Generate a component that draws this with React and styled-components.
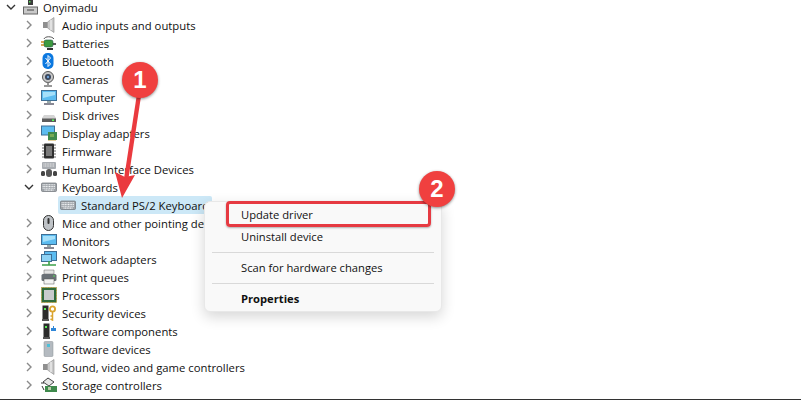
import React from "react";
import styled, { createGlobalStyle } from "styled-components";

const Global = createGlobalStyle`
  html, body { margin: 0; padding: 0; background: #fff; }
  body { font-family: "Open Sans", "Noto Sans", "Liberation Sans", sans-serif; }
`;
const Page = styled.div`
  position: relative; width: 801px; height: 400px; overflow: hidden; background: #fff;
  border-bottom: 1px solid #333; box-sizing: border-box;
`;
const Tree = styled.ul`
  list-style: none; margin: -2px 0 0; padding: 0; display: flex; flex-direction: column;
`;
const Row = styled.li`
  display: flex; align-items: center; height: 18px; box-sizing: border-box;
  padding-left: ${p => p.$indent}px; font-size: 11.3px; color: #111; white-space: nowrap;
`;
const Selected = styled.span`
  display: flex; align-items: center; height: 18px; width: 154px; box-sizing: border-box;
  padding-left: 2px; background: #cce8f7; border-radius: 2px;
`;
const Chevron = styled.svg`
  width: 10px; height: 10px; flex: none; margin-right: ${p => p.$gap}px;
  fill: none; stroke: ${p => p.$open ? "#333" : "#8a8a8a"}; stroke-width: 1.4;
`;
const Icon = styled.svg`
  width: 16px; height: 16px; flex: none; margin-right: ${p => p.$gap ?? 5}px;
`;
const Label = styled.span`letter-spacing: 0;`;

const Menu = styled.div`
  position: absolute; left: 204px; top: 201px; width: 238px; height: 111px; box-sizing: border-box;
  background: #f9f9f9; border: 1px solid #e8e8e8; border-radius: 6px;
  box-shadow: 0 5px 14px rgba(0,0,0,.16);
  padding: 2px 7px 0; display: flex; flex-direction: column; font-size: 11.2px; color: #111;
`;
const Item = styled.div`
  height: ${p => p.$h}px; flex: none; display: flex; align-items: center; padding-left: 29px;
  font-weight: ${p => p.$bold ? 700 : 400};
`;
const Divider = styled.div`height: 1px; flex: none; background: #d9d9d9; margin: ${p => p.$m};`;
const Highlight = styled.div`
  position: absolute; left: 226px; top: 201px; width: 205px; height: 26px; box-sizing: border-box;
  border: 3px solid #e63a42; border-radius: 4px; box-shadow: 0 1px 2px rgba(0,0,0,.3);
`;
const Badge = styled.div`
  position: absolute; left: ${p => p.$x}px; top: ${p => p.$y}px; width: 36px; height: 36px;
  border-radius: 50%; background: #f0403f; color: #fff; display: flex; align-items: center;
  justify-content: center; font: 700 24px "Liberation Sans", sans-serif;
  box-shadow: 0 1px 3px rgba(0,0,0,.45);
`;
const Overlay = styled.svg`position: absolute; left: 0; top: 0; pointer-events: none;`;

const Right = ({ gap }) => <Chevron $gap={gap} viewBox="0 0 10 10"><path d="M3 1l4 4-4 4" /></Chevron>;
const Down = ({ gap }) => <Chevron $open $gap={gap} viewBox="0 0 10 10"><path d="M1 3l4 4 4-4" /></Chevron>;

const Kb = () => <>
  <rect x="0.5" y="4" width="15" height="8.5" rx="1" fill="#9ea3a8" stroke="#6f7378" strokeWidth=".7" />
  <path d="M1.6 5.7h12.8M1.6 7.5h12.8M1.6 9.3h12.8M3.5 11.1h9" stroke="#f2f4f5" strokeWidth="1.1" strokeDasharray="1.1 .5" />
</>;
const Speaker = () => <>
  <path d="M2 5h4.5v6H2z" fill="#8f8f8f" />
  <path d="M6.5 5L13 .5v15L6.5 11z" fill="#c9c9c9" stroke="#8a8a8a" strokeWidth=".6" />
  <path d="M10 3v10" stroke="#ececec" strokeWidth="1.4" />
</>;
const Screen = () => <>
  <rect x="0.5" y="1.5" width="15" height="10" fill="#5cbcf0" stroke="#3f6f95" />
  <path d="M2 3h12v3L2 9z" fill="#a5e0fa" />
  <path d="M6 12h4v2H6z" fill="#9aa" />
  <path d="M3 15h10" stroke="#556" strokeWidth="1.4" />
</>;
const icons = {
  pc: <><path d="M5 0h5v6H5z" fill="#3c3c3c" /><rect x="6" y="2" width="1.5" height="1.5" fill="#5d5" /><rect x="0.5" y="8" width="14" height="7" fill="#c9c9c9" stroke="#666" /><path d="M4 11h7" stroke="#444" /></>,
  audio: <Speaker />,
  battery: <><path d="M3 4c1-3 8-3 10 0" fill="none" stroke="#555" /><rect x="3" y="5" width="9" height="7" rx="2" fill="#3d9a3f" stroke="#254" strokeWidth=".6" /><path d="M0 7h3M0 10h3" stroke="#c98a22" strokeWidth="1.4" /><path d="M12 9h3" stroke="#333" strokeWidth="1.6" /><path d="M6 13h6v2H6z" fill="#333" /></>,
  bluetooth: <><rect x="1.5" y="0" width="11" height="16" rx="5" fill="#0b78e0" /><path d="M4.5 5l5 6-2.5 2.5v-11L9.5 5l-5 6" fill="none" stroke="#fff" strokeWidth="1" /></>,
  camera: <><circle cx="7" cy="6" r="5.5" fill="#c7c7c7" stroke="#555" /><circle cx="7" cy="6" r="3" fill="#39465c" /><circle cx="7" cy="6" r="1.2" fill="#6ea0d8" /><path d="M7 11v3M3 15h8" stroke="#777" strokeWidth="1.5" /></>,
  computer: <Screen />,
  disk: <><path d="M3 8h10l2 3v4H1v-4z" fill="#d4d4d4" /><rect x="1" y="11.5" width="14" height="3.5" fill="#5c5c5c" /><rect x="11" y="12.5" width="2" height="1.5" fill="#5f5" /></>,
  display: <><rect x="0.5" y="1" width="13" height="9" fill="#5cbcf0" stroke="#3f6f95" /><rect x="7" y="7" width="9" height="8" fill="#3f8a4c" /><path d="M8 15v1M10 15v1M12 15v1M14 15v1" stroke="#c9a23a" /><rect x="9" y="9" width="4" height="3" fill="#7a5" /></>,
  firmware: <><rect x="3" y="0.5" width="10" height="15" rx="1" fill="#2f2f2f" /><rect x="5" y="3" width="6" height="10" fill="#7a7a7a" /><path d="M1 2h2M1 5h2M1 8h2M1 11h2M1 14h2M13 2h2M13 5h2M13 8h2M13 11h2M13 14h2" stroke="#666" /></>,
  hid: <><rect x="1" y="1" width="14" height="7" rx="1" fill="#a9adb2" /><path d="M2.5 3h11M2.5 5h11" stroke="#eee" strokeDasharray="1 .6" /><rect x="5" y="8" width="6" height="8" rx="3" fill="#555" /><rect x="0" y="10" width="4" height="5" rx="1.5" fill="#444" /><rect x="12" y="10" width="4" height="5" rx="1.5" fill="#444" /></>,
  kb: <Kb />,
  mouse: <><rect x="2.5" y="0.5" width="10" height="15" rx="5" fill="#bfc3c7" stroke="#333" /><rect x="6.5" y="3" width="2" height="6" rx="1" fill="#333" /></>,
  monitor: <Screen />,
  network: <><rect x="3.5" y="0.5" width="12" height="9" fill="#5cbcf0" stroke="#3f6f95" /><rect x="0.5" y="3.5" width="10" height="7" fill="#8ed2f4" stroke="#3f6f95" /><path d="M1 14h14M8 10v4" stroke="#3da04a" strokeWidth="1.6" /></>,
  print: <><path d="M3 1h10v4H3z" fill="#e4e4e4" stroke="#666" strokeWidth=".5" /><rect x="0.5" y="5" width="15" height="7" rx="1.5" fill="#6a7076" /><rect x="3" y="10" width="10" height="5" fill="#f4f4f4" stroke="#555" strokeWidth=".5" /><rect x="12" y="6.5" width="2" height="1" fill="#5d5" /></>,
  cpu: <><rect x="0.5" y="0.5" width="15" height="15" fill="#2f6b3c" stroke="#b59a3a" strokeDasharray="1 .6" /><rect x="3" y="3" width="10" height="10" fill="#c9cbcc" /></>,
  security: <><rect x="1.5" y="0.5" width="6" height="14" fill="#2c2c2c" /><rect x="3" y="3" width="2" height="2" fill="#5e5" /><rect x="1" y="14" width="7" height="2" fill="#555" /><circle cx="11.5" cy="4" r="2.6" fill="none" stroke="#dba42e" strokeWidth="1.8" /><path d="M11.5 7v8l-2-1M11.5 11h-2" fill="none" stroke="#dba42e" strokeWidth="1.5" /></>,
  swcomp: <><rect x="2.5" y="0.5" width="6" height="14" fill="#2c2c2c" /><rect x="4" y="3" width="2" height="2" fill="#5e5" /><rect x="2" y="14" width="7" height="2" fill="#555" /><path d="M10 5h2V3h1v2h2v3h-5z" fill="#2f86d8" /></>,
  swdev: <><rect x="3" y="0.5" width="9" height="15" rx="1" fill="#b4bac0" stroke="#8b9197" strokeWidth=".5" /><rect x="6" y="3" width="3" height="3" fill="#4dbfd8" /></>,
  storage: <><path d="M2 5l5-4 6 4-5 4z" fill="#e6e6e6" stroke="#444" /><path d="M1 9l2 4M0 6h3" stroke="#333" /><rect x="4" y="9" width="12" height="6" fill="#3f8a4c" /><rect x="7" y="10" width="3" height="3" fill="#bca" /></>,
};

const items = [
  ["audio", "Audio inputs and outputs"], ["battery", "Batteries"], ["bluetooth", "Bluetooth"],
  ["camera", "Cameras"], ["computer", "Computer"], ["disk", "Disk drives"],
  ["display", "Display adapters"], ["firmware", "Firmware"], ["hid", "Human Interface Devices"],
];
const after = [
  ["mouse", "Mice and other pointing devices"], ["monitor", "Monitors"], ["network", "Network adapters"],
  ["print", "Print queues"], ["cpu", "Processors"], ["security", "Security devices"],
  ["swcomp", "Software components"], ["swdev", "Software devices"],
  ["audio", "Sound, video and game controllers"], ["storage", "Storage controllers"],
];
const Ico = ({ name, gap }) => <Icon $gap={gap} viewBox="0 0 16 16">{icons[name]}</Icon>;
const Node = ({ name, label }) => (
  <Row $indent={24}><Right gap={7} /><Ico name={name} /><Label>{label}</Label></Row>
);

export default function App() {
  return (
    <Page>
      <Global />
      <Tree>
        <Row $indent={6}><Down gap={7} /><Ico name="pc" gap={4} /><Label>Onyimadu</Label></Row>
        {items.map(([n, l]) => <Node key={l} name={n} label={l} />)}
        <Row $indent={24}><Down gap={7} /><Ico name="kb" /><Label>Keyboards</Label></Row>
        <Row $indent={58}><Selected><Ico name="kb" /><Label>Standard PS/2 Keyboard</Label></Selected></Row>
        {after.map(([n, l]) => <Node key={l} name={n} label={l} />)}
      </Tree>
      <Menu>
        <Item $h={21}>Update driver</Item>
        <Item $h={22}>Uninstall device</Item>
        <Divider $m="5px 0 4px" />
        <Item $h={21}>Scan for hardware changes</Item>
        <Divider $m="5px 0 4px" />
        <Item $h={21} $bold>Properties</Item>
      </Menu>
      <Highlight />
      <Overlay width="801" height="400" viewBox="0 0 801 400">
        <path d="M139 95L126 180" stroke="#ea3a3f" strokeWidth="4.4" />
        <path d="M122 198l-7-26 10 5 10-2z" fill="#ea3a3f" />
      </Overlay>
      <Badge $x={122} $y={62}>1</Badge>
      <Badge $x={419} $y={171}>2</Badge>
    </Page>
  );
}
